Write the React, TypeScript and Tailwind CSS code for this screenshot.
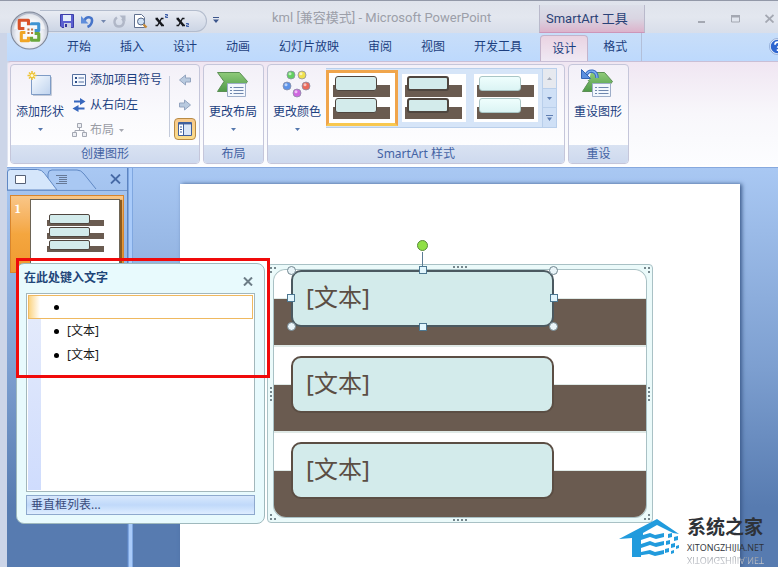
import type { ReactNode } from "react";
import clsx from "clsx";

const TABS = ["开始", "插入", "设计", "动画", "幻灯片放映", "审阅", "视图", "开发工具"];

const ITEMS = ["[文本]", "[文本]", "[文本]"];

function Caret({ className }: { className?: string }) {
  return (
    <svg width="5" height="3" viewBox="0 0 5 3" className={className}>
      <path d="M0 0h5L2.500 3z" fill="currentColor" />
    </svg>
  );
}

function OfficeOrb() {
  return (
    <button aria-label="Office" className="absolute left-[10px] top-[11px] z-10">
      <svg width="39" height="39" viewBox="0 0 38 38">
        <defs>
          <radialGradient id="orb" cx="50%" cy="60%" r="55%">
            <stop offset="0" stopColor="#ffffff" />
            <stop offset="0.65" stopColor="#eceef4" />
            <stop offset="1" stopColor="#b5bccb" />
          </radialGradient>
        </defs>
        <circle cx="19" cy="19" r="18" fill="url(#orb)" stroke="#7f8798" />
        <path d="M4 18a15 15 0 0 1 30 0q-15-6-30 0z" fill="#fff" opacity="0.6" />
        <g fill="none" strokeWidth="3" strokeLinejoin="round">
          <path d="M14 17H9V9h9v5" stroke="#d9532a" />
          <path d="M21 14v-1.500h7V19h-4" stroke="#3f93d2" />
          <path d="M15 21h-4v8h7v-4" stroke="#f0a526" />
          <path d="M24 22h4v6.500h-7V25" stroke="#6aa83c" />
        </g>
        <path d="M17 17h2v2h-2zM20.500 17h2v2h-2zM17 20.500h2v2h-2zM20.500 20.500h2v2h-2z" fill="#c0703f" />
      </svg>
    </button>
  );
}

function SaveIcon() {
  return (
    <svg width="14" height="14" viewBox="0 0 14 14">
      <path d="M.5.5h13v13H2L.5 12z" fill="#5a5fd0" stroke="#3c3ea8" />
      <path d="M3 1h8v6H3z" fill="#e4ecfa" />
      <path d="M4 9h7v5H4z" fill="#c9cfe2" />
      <path d="M5 10h2v3H5z" fill="#35359a" />
    </svg>
  );
}

function UndoIcon() {
  return (
    <svg width="13" height="13" viewBox="0 0 13 13">
      <path d="M3.500 5.500C5 1 11.500 1 11 6c-.2 2.700-1.500 4.700-4.500 6" fill="none" stroke="#4674c9" strokeWidth="2.600" />
      <path d="M0 1v7.500h7.500z" fill="#5f8ddb" />
    </svg>
  );
}

function RedoIcon() {
  return (
    <svg width="13" height="13" viewBox="0 0 13 13">
      <path d="M4 2.500C0 5 1 11.500 6 11.500S12 6 9 3.500" fill="none" stroke="#b0b7c7" strokeWidth="2.400" />
      <path d="M6.500.5h6v6z" fill="#b0b7c7" />
    </svg>
  );
}

function PreviewIcon() {
  return (
    <svg width="15" height="15" viewBox="0 0 15 15">
      <path d="M1.500.5h7l3 3v10h-10z" fill="#fff" stroke="#60708f" />
      <circle cx="8" cy="7.500" r="3.500" fill="#cfe1f5" stroke="#536585" />
      <path d="M10.500 10.500l3 3" stroke="#c58a3a" strokeWidth="2.400" />
    </svg>
  );
}

function ScriptIcon({ sub }: { sub?: boolean }) {
  return (
    <svg width="14" height="14" viewBox="0 0 14 14" fill="none">
      <path d="M1.500 4.500l6 7" stroke="#16181d" strokeWidth="2.600" />
      <path d="M.5 4.500h2.500M6 11.500h3M8.500 4.500H6.500L2.500 11.500H.5" stroke="#16181d" strokeWidth="1.300" />
      <path d={sub ? "M10 9.500h2.500v1.500H10.500v1.500H13" : "M10 .5h2.500V2H10.500v1.500H13"} stroke="#3e5fa8" />
    </svg>
  );
}

function TitleBar() {
  return (
    <div className="flex h-[33px] items-start border-t border-[#9298a8] bg-gradient-to-b from-[#dfe3ec] via-[#e3e7ef] to-[#d8deea] pl-[40px]">
      <div className="mt-[9px] flex h-[22px] w-[167px] shrink-0 items-center gap-[7px] rounded-r-full border border-l-0 border-[#b3bccd] bg-gradient-to-b from-[#e9ecf3] to-[#ccd5e5] pl-5">
        <button aria-label="保存"><SaveIcon /></button>
        <button aria-label="撤消"><UndoIcon /></button>
        <button aria-label="撤消列表" className="text-[#7286ae]"><Caret /></button>
        <button aria-label="恢复"><RedoIcon /></button>
        <button aria-label="打印预览"><PreviewIcon /></button>
        <button aria-label="上标"><ScriptIcon /></button>
        <button aria-label="下标"><ScriptIcon sub /></button>
      </div>
      <button aria-label="自定义快速访问工具栏" className="ml-1.5 mt-4 text-[#3d568c]">
        <svg width="6" height="6" viewBox="0 0 6 6" fill="currentColor">
          <path d="M0 0h6v1H0zM0 2.500h6L3 6z" />
        </svg>
      </button>
      <h1 className="ml-[53px] mt-[7px] w-[267px] shrink-0 whitespace-nowrap font-[Roboto,'Noto_Sans_CJK_SC',sans-serif] text-[13px] leading-5 text-[#9c9fa9]">
        kml [兼容模式] - Microsoft PowerPoint
      </h1>
      <div className="mt-1 h-7 w-[106px] shrink-0 border-x border-b border-x-[#b9b9cb] border-b-[#cd96b8] bg-gradient-to-b from-[#dcdfe9] via-[#d9d5e2] to-[#dcb3cb] pl-1.5 font-[Roboto,'Noto_Sans_CJK_SC',sans-serif] text-[13px] leading-[28px] text-[#2b4277]">
        SmartArt 工具
      </div>
      <div className="ml-auto flex items-center gap-[25px] pr-1 pt-[13px] text-[#a4a8b2]">
        <button aria-label="最小化">
          <svg width="9" height="9" viewBox="0 0 9 9"><path d="M1 7h7v2H1z" fill="currentColor" /></svg>
        </button>
        <button aria-label="最大化">
          <svg width="9" height="9" viewBox="0 0 9 9"><path d="M.5 1.500h8v6.500h-8z" fill="none" stroke="currentColor" /><path d="M0 1h9v2.500H0z" fill="currentColor" /></svg>
        </button>
        <button aria-label="关闭">
          <svg width="9" height="9" viewBox="0 0 9 9"><path d="M.5 1l8 7.500M8.500 1l-8 7.500" stroke="currentColor" strokeWidth="1.800" /></svg>
        </button>
      </div>
    </div>
  );
}

function TabBar() {
  return (
    <nav className="ml-[7px] flex h-7 items-end gap-px bg-gradient-to-b from-[#c8def9] to-[#bdd9fd] pl-[46px] text-[#1c3f80]">
      {TABS.map((tab) => (
        <button key={tab} className="h-7 shrink-0 px-3.5">{tab}</button>
      ))}
      <button className="ml-[3px] h-[26px] shrink-0 rounded-t border border-b-0 border-[#c3b3cb] bg-gradient-to-b from-[#ead3e2] to-[#efe9f4] px-[11px]">
        设计
      </button>
      <button className="h-7 shrink-0 border-r border-[#b2bfd9] px-3.5">格式</button>
      <button aria-label="帮助" className="mb-1.5 -mr-2 ml-auto shrink-0">
        <svg width="17" height="17" viewBox="0 0 17 17">
          <circle cx="8.500" cy="8.500" r="7.500" fill="#2f66cf" stroke="#e9f1fd" strokeWidth="1.500" />
          <circle cx="8.500" cy="8.500" r="8" fill="none" stroke="#6f8fc8" strokeWidth="0.700" />
          <path d="M6 6.700c0-3.400 5-3.200 5-.3 0 1.800-2.400 1.700-2.400 3.400M8.600 11.200v1.800" fill="none" stroke="#fff" strokeWidth="1.700" />
        </svg>
      </button>
    </nav>
  );
}

function Group({ label, className, children }: { label: string; className?: string; children: ReactNode }) {
  return (
    <section className={clsx("flex shrink-0 flex-col overflow-hidden rounded border border-[#c5c6da] bg-gradient-to-b from-[#f3f0f8] via-[#fafafd] to-white", className)}>
      <div className="flex h-20 pt-[3px]">{children}</div>
      <h2 className="h-[18px] bg-gradient-to-b from-[#d9e2f2] to-[#ced9ee] text-center leading-[18px] text-[#4463a4]">{label}</h2>
    </section>
  );
}

function BigButton({ label, caret, children }: { label: string; caret?: boolean; children: ReactNode }) {
  return (
    <button className="flex w-[58px] shrink-0 flex-col items-center text-[#1c3f80]">
      {children}
      <span className="mt-1 whitespace-nowrap leading-4">{label}</span>
      {caret && <Caret className="mt-2 text-[#5577ad]" />}
    </button>
  );
}

function AddShapeIcon() {
  return (
    <svg width="32" height="32" viewBox="0 0 32 32">
      <defs>
        <linearGradient id="shape" x1="0" y1="0" x2="1" y2="1">
          <stop offset="0" stopColor="#f7fbff" />
          <stop offset="1" stopColor="#bfd3ee" />
        </linearGradient>
      </defs>
      <path d="M7.500 7.500h19v19h-19z" fill="url(#shape)" stroke="#7f9cc6" />
      <path d="M27.500 9v18.500H9" fill="none" stroke="#c3cad8" />
      <path d="M8 3v9M3.500 7.500h9M5 4.500l6 6M11 4.500l-6 6" stroke="#eec437" strokeWidth="1.600" />
      <circle cx="8" cy="7.500" r="1.500" fill="#fffbd8" />
    </svg>
  );
}

function LayoutIcon({ reset }: { reset?: boolean }) {
  return (
    <svg width="36" height="32" viewBox="0 0 36 32">
      <defs>
        <linearGradient id="leaf" x1="0" y1="0" x2="0" y2="1">
          <stop offset="0" stopColor="#8fcb7a" />
          <stop offset="1" stopColor="#4f9a48" />
        </linearGradient>
      </defs>
      <path d="M2.500 4.500h22l8 9-8 10h-22l6.500-10z" fill="url(#leaf)" stroke="#5b8f55" />
      <path d="M12.500 15.500h18v13h-18z" fill="#f3f7fd" stroke="#9dadc8" />
      <path d="M15 19.500h2M18.500 19.500h10M15 22.500h2M18.500 22.500h10M15 25.500h2M18.500 25.500h10" stroke="#6e86ad" />
      {reset && (
        <>
          <path d="M0 0h12L9 12 2 13z" fill="#f6f4fa" />
          <path d="M6 7c3-6 11-5 11 3" fill="none" stroke="#3869c0" strokeWidth="3.400" />
          <path d="M6 7c3-6 11-5 11 3" fill="none" stroke="#7fb0f0" strokeWidth="1.400" />
          <path d="M1.500 1.500v9h9z" fill="#5c8fdf" stroke="#3564b5" />
        </>
      )}
    </svg>
  );
}

function ColorsIcon() {
  const dots = [
    [10, 7, "#62cf5f"],
    [21, 7, "#efe04d"],
    [6, 18, "#5c92e8"],
    [25, 18, "#ea6a5b"],
    [16, 25, "#cf66e0"],
  ] as const;
  return (
    <svg width="32" height="32" viewBox="0 0 32 32">
      {dots.map(([x, y, fill]) => (
        <g key={fill}>
          <circle cx={x} cy={y} r="4" fill={fill} stroke="#8b8fa5" strokeWidth="0.800" />
          <circle cx={x - 1} cy={y - 1.3} r="1.500" fill="#fff" opacity="0.600" />
        </g>
      ))}
    </svg>
  );
}

function ArrowIcon({ right }: { right?: boolean }) {
  return (
    <svg width="12" height="12" viewBox="0 0 12 12">
      <path
        d={right ? "M.5 4h5V1l6 5-6 5V8h-5z" : "M11.500 4h-5V1l-6 5 6 5V8h5z"}
        fill="#b9cadf"
        stroke="#93a4bf"
      />
    </svg>
  );
}

function CreateGroup() {
  return (
    <Group label="创建图形" className="w-[190px]">
      <BigButton label="添加形状" caret>
        <AddShapeIcon />
      </BigButton>
      <div className="flex flex-col gap-px pl-[3px] text-[#1c3f80]">
        <button className="flex h-6 items-center gap-[3px]">
          <svg width="15" height="14" viewBox="0 0 15 14">
            <path d="M.5 1.500h13v11H.5z" fill="#f4f8ff" stroke="#55709f" />
            <path d="M3 4h2v2H3zM3 8h2v2H3z" fill="#2f4f86" />
            <path d="M6.500 5H12M6.500 9H12" stroke="#55709f" />
          </svg>
          添加项目符号
        </button>
        <button className="flex h-6 items-center gap-[3px]">
          <svg width="15" height="14" viewBox="0 0 15 14" fill="#3767bd">
            <path d="M2 2.500h6V0l5.500 3.500L8 7V4.500H2zM12.500 9.500h-6V7L.5 10.500 6.500 14v-2.500h6z" />
          </svg>
          从右向左
        </button>
        <button className="flex h-6 items-center gap-[3px] text-[#9a9ca5]">
          <svg width="15" height="14" viewBox="0 0 15 14" fill="#eceef3" stroke="#a3a7b2">
            <path d="M7.500 5v3M3 10V7.500h9V10" fill="none" />
            <path d="M5.500.5h4v4h-4zM.5 9.500h4v4h-4zM10.500 9.500h4v4h-4z" />
          </svg>
          布局
          <Caret className="ml-0.5 text-[#a7a9b1]" />
        </button>
      </div>
      <div className="mb-2 ml-[7px] mt-2 w-px bg-[#c4cbdb]" />
      <div className="flex flex-col items-center gap-px pl-1">
        <button aria-label="升级" className="flex h-6 items-center"><ArrowIcon /></button>
        <button aria-label="降级" className="flex h-6 items-center"><ArrowIcon right /></button>
        <button aria-label="文本窗格" aria-pressed="true" className="flex h-[22px] w-[22px] items-center justify-center rounded-sm border border-[#b98b45] bg-gradient-to-b from-[#f8c98c] to-[#fbdc8a]">
          <svg width="14" height="14" viewBox="0 0 14 14">
            <path d="M.5.5h13v13H.5z" fill="#fff" stroke="#405f9d" />
            <path d="M1 1h12v1.500H1z" fill="#405f9d" />
            <path d="M2 5h2M2 7.500h2M2 10h2" stroke="#405f9d" />
            <path d="M5.500 2v11" stroke="#405f9d" />
            <path d="M6 3h7v10H6z" fill="#dbe6f7" />
          </svg>
        </button>
      </div>
    </Group>
  );
}

type Look = "outline" | "heavy" | "soft";

function StyleThumb({ look }: { look: Look }) {
  return (
    <span className="flex h-12 w-16 flex-col items-start gap-[10px] bg-white pl-[3px] pt-[11px]">
      {[0, 1].map((i) => (
        <span key={i} className="relative block h-3 w-[57px] bg-[#6a5b50]">
          <span
            className={clsx(
              "absolute -top-[9px] left-[2px] h-[15px] w-[42px] rounded-[3px]",
              look === "outline" && "border border-[#4f463f] bg-[#d3ebeb]",
              look === "heavy" && "border-2 border-[#4f463f] bg-[#d3ebeb]",
              look === "soft" && "border border-[#a9c6c6] bg-gradient-to-b from-[#effefd] to-[#dbf4f4]"
            )}
          />
        </span>
      ))}
    </span>
  );
}

function StylesGroup() {
  return (
    <Group label="SmartArt 样式" className="w-[298px]">
      <BigButton label="更改颜色" caret>
        <ColorsIcon />
      </BigButton>
      <div className="flex h-[60px] border border-l-0 border-[#b9cfeb] bg-[#d6e5f8]">
        <button aria-label="样式 1" className="mt-px flex h-14 w-[72px] items-center justify-center border-[3px] border-[#f0a54b] border-b-[#f8c850] bg-white">
          <StyleThumb look="outline" />
        </button>
        <button aria-label="样式 2" className="flex w-[72px] items-center justify-center"><StyleThumb look="heavy" /></button>
        <button aria-label="样式 3" className="flex w-[72px] items-center justify-center"><StyleThumb look="soft" /></button>
        <div className="flex w-[14px] flex-col divide-y divide-[#b9cfeb] border-l border-[#b9cfeb] text-[#5e7eb2]">
          <button aria-label="上一行" className="flex flex-1 items-center justify-center bg-[#e6e9ef] text-[#a5abb8]">
            <svg width="5" height="3" viewBox="0 0 5 3"><path d="M0 3h5L2.500 0z" fill="currentColor" /></svg>
          </button>
          <button aria-label="下一行" className="flex flex-1 items-center justify-center bg-[#cfe0f6]"><Caret /></button>
          <button aria-label="其他" className="flex flex-1 items-center justify-center bg-[#cfe0f6]">
            <svg width="7" height="6" viewBox="0 0 7 6" fill="currentColor"><path d="M0 0h7v1H0zM1 2.500h5L3.500 6z" /></svg>
          </button>
        </div>
      </div>
    </Group>
  );
}

function Ribbon() {
  return (
    <div className="ml-[7px] flex gap-[3px] rounded-tl border-b-2 border-l border-t border-[#dfe3f0] border-t-[#c9bfd6] border-b-white bg-gradient-to-b from-[#f0e6f2] via-[#f8f7fb] to-[#fcfdff] pb-px pl-0.5 pt-0.5">
      <CreateGroup />
      <Group label="布局" className="w-[61px]">
        <BigButton label="更改布局" caret>
          <LayoutIcon />
        </BigButton>
      </Group>
      <StylesGroup />
      <Group label="重设" className="w-[61px]">
        <BigButton label="重设图形">
          <LayoutIcon reset />
        </BigButton>
      </Group>
    </div>
  );
}

function SlidePane() {
  return (
    <aside className="w-[121px] shrink-0 border-r border-[#5d84c1]">
      <div className="relative flex h-[23px] items-center border-b border-[#6f94cc]">
        <svg width="120" height="22" viewBox="0 0 120 22" className="absolute left-0 top-0">
          <path d="M41 21V6q0-4 4-4h25q4 0 7 4l12 15" fill="#a9c8f3" stroke="#6088c4" />
          <path d="M.5 22V4q0-2.500 3-2.500h27q4 0 7 4L50 22z" fill="#d5e6fb" stroke="#6088c4" />
        </svg>
        <button aria-label="幻灯片" className="relative ml-2">
          <svg width="11" height="9" viewBox="0 0 11 9"><path d="M.5.5h10v8H.5z" fill="#fff" stroke="#566176" /></svg>
        </button>
        <button aria-label="大纲" className="relative ml-[30px]">
          <svg width="12" height="9" viewBox="0 0 12 9"><path d="M0 .5h11M3 2.500h8M3 4.500h8M3 6.500h8M0 8.500h11" stroke="#667997" /></svg>
        </button>
        <button aria-label="关闭" className="relative ml-auto mr-1.5">
          <svg width="11" height="10" viewBox="0 0 11 10"><path d="M1 .5l9 9M10 .5l-9 9" stroke="#476aa6" strokeWidth="1.800" /></svg>
        </button>
      </div>
      <button className="ml-[3px] mt-1 flex h-[78px] w-[114px] items-start border border-[#d8852d] bg-gradient-to-b from-[#f9c687] via-[#f4a63f] to-[#ef9a2f] pl-1 pt-[3px] text-white">
        <span className="w-[15px] text-left font-serif text-[12px] font-bold leading-5">1</span>
        <span className="flex h-[68px] w-[90px] flex-col items-start border border-[#6d6455] bg-white pl-4 pt-5 shadow-[2px_1px_1px_#8a5a20]">
          {ITEMS.map((_, i) => (
            <span key={i} className="relative mb-[7px] block h-1.5 w-[57px] bg-[#6a5b50]">
              <span className="absolute -top-[6px] left-[2px] h-[10px] w-[41px] rounded-[2px] border border-[#4f463f] bg-[#d3ebeb]" />
            </span>
          ))}
        </span>
      </button>
    </aside>
  );
}

function Grip({ className, count = 4 }: { className: string; count?: number }) {
  return (
    <span className={clsx("absolute flex gap-0.5", className)}>
      {Array.from({ length: count }, (_, i) => (
        <i key={i} className="block h-0.5 w-0.5 bg-[#75868c]" />
      ))}
    </span>
  );
}

const ROUND = "absolute h-[9px] w-[9px] rounded-full border border-[#71868f] bg-[#e9f4f8]";
const SQUARE = "absolute h-2 w-2 border border-[#4d7892] bg-[#e2f6fd]";

function Handles() {
  return (
    <>
      <span className="absolute -top-[20px] left-[129px] h-4 w-px bg-[#5d7d95]" />
      <span className="absolute -top-[32px] left-[124px] h-[11px] w-[11px] rounded-full border border-[#5a8a3c] bg-[#8fe045]" />
      <span className={clsx(ROUND, "-left-[6px] -top-[6px]")} />
      <span className={clsx(ROUND, "-right-[6px] -top-[6px]")} />
      <span className={clsx(ROUND, "-bottom-[6px] -left-[6px]")} />
      <span className={clsx(ROUND, "-bottom-[6px] -right-[6px]")} />
      <span className={clsx(SQUARE, "-top-[6px] left-[126px]")} />
      <span className={clsx(SQUARE, "-bottom-[6px] left-[126px]")} />
      <span className={clsx(SQUARE, "-left-[6px] top-[22px]")} />
      <span className={clsx(SQUARE, "-right-[6px] top-[22px]")} />
    </>
  );
}

function SmartArt() {
  return (
    <div className="absolute left-[87px] top-[80px] w-[386px] rounded border border-[#a9c1c5] bg-[#ebfafa] px-[5px] py-1">
      <div className="rounded-xl border border-[#a9c1c5] bg-[#dfe9e6]">
        {ITEMS.map((text, i) => (
          <div key={i} className="relative">
            <div className={clsx("h-7 bg-white", i === 0 && "rounded-t-xl")} />
            <div className={clsx("mt-px h-[46px] bg-[#6a5b50]", i === 2 && "rounded-b-xl")} />
            {i < 2 && <div className="h-[11px] border-t-2 border-[#dfe9e6] bg-white" />}
            <div
              className={clsx(
                "absolute left-[17px] top-0 h-[57px] w-[263px] rounded-[10px] border-2 bg-[#d3ebeb] pl-[13px] text-2xl leading-[49px] text-[#5b4e44]",
                i === 0 ? "border-[#4b5960]" : "border-[#5b4e44]"
              )}
            >
              {text}
              {i === 0 && <Handles />}
            </div>
          </div>
        ))}
      </div>
      <Grip className="left-[185px] top-px" />
      <Grip className="bottom-px left-[185px]" />
      <Grip className="left-[2px] top-[122px] flex-col" />
      <Grip className="right-[2px] top-[122px] flex-col" />
      <Grip className="left-[2px] top-[2px]" count={2} />
      <Grip className="left-[2px] top-[6px]" count={1} />
      <Grip className="right-[2px] top-[2px]" count={2} />
      <Grip className="right-[2px] top-[6px]" count={1} />
      <Grip className="bottom-[2px] left-[2px]" count={2} />
      <Grip className="bottom-[6px] left-[2px]" count={1} />
      <Grip className="bottom-[2px] right-[2px]" count={2} />
      <Grip className="bottom-[6px] right-[2px]" count={1} />
    </div>
  );
}

function TextPane() {
  return (
    <div className="absolute left-[16px] top-[95px] w-[249px] rounded-lg border border-[#9fb9bd] bg-[#e8fafd] px-[9px] pb-2 pt-1">
      <div className="flex h-[25px] items-start justify-between">
        <h3 className="-ml-0.5 font-bold leading-5 text-[#1f4679]">在此处键入文字</h3>
        <button aria-label="关闭" className="mr-0.5 mt-[9px]">
          <svg width="10" height="9" viewBox="0 0 10 9"><path d="M1 .5l8 8M9 .5l-8 8" stroke="#6d7d87" strokeWidth="2" /></svg>
        </button>
      </div>
      <div className="relative h-[199px] border border-[#a3b7bb] bg-white p-px">
        <div className="absolute bottom-px left-px top-px w-[13px] bg-gradient-to-b from-[#e6ecfb] to-[#cfdcfd]" />
        <ul className="relative leading-6 text-[#1a1a1a]">
          {["", "[文本]", "[文本]"].map((text, i) => (
            <li
              key={i}
              className={clsx(
                "flex h-6 items-center gap-2",
                i === 0
                  ? "border border-[#efb960] bg-gradient-to-r from-[#fbd481] via-white via-5% to-white pl-[25px]"
                  : "pl-[26px]"
              )}
            >
              <span className="h-[5px] w-[5px] rounded-full bg-black" />
              {text}
            </li>
          ))}
        </ul>
      </div>
      <button className="mt-[3px] block h-5 w-full border border-[#8ea9cd] bg-gradient-to-b from-[#d8e8fc] via-[#c0d9fa] to-[#deedff] pl-1 text-left leading-[18px] text-[#3a4c7c]">
        垂直框列表...
      </button>
    </div>
  );
}

function Watermark() {
  return (
    <div className="absolute bottom-0 right-[14px] flex items-start gap-1.5">
      <svg width="62" height="38" viewBox="0 0 62 38" className="mt-1.5">
        <path d="M0 20L38 0l22 15-6-1-16-8-14 8v3l-7 4v13h5v4h-9V19z" fill="#219bdd" />
        <path d="M17 18l14-4 5 2 9-2v4l-8 2-6-2-9 3v4l9-3 5 2 9-2v4l-8 2-6-2-9 3v4l9-2 5 2 9-2v4l-9 2-6-2-13 2z" fill="#219bdd" />
        <path d="M49 15l4-1v4l-4 1zM55 18l4-1v4l-4 1zM47 22l4-1v4l-4 1zM52 25l4-1v4l-4 1zM57 27l3-1v3l-3 1zM46 30l4-1v4l-4 1zM52 32l3-1v3l-3 1z" fill="#219bdd" />
      </svg>
      <div className="text-[#2e3238]">
        <div className="text-[19px] font-bold leading-7">系统之家</div>
        <div className="font-['Open_Sans'] text-[9px] leading-[13px]">XITONGZHIJIA.NET</div>
        <div aria-hidden="true" className="-scale-y-100 bg-gradient-to-t from-[#8a8f98] to-[#d8dade] bg-clip-text font-['Open_Sans'] text-[9px] leading-[13px] text-transparent">
          XITONGZHIJIA.NET
        </div>
      </div>
    </div>
  );
}

export default function App() {
  return (
    <div className="relative flex min-h-screen flex-col overflow-hidden bg-[#ccd5e8] font-['Noto_Sans','Noto_Sans_CJK_SC',sans-serif] text-[12px]">
      <OfficeOrb />
      <TitleBar />
      <TabBar />
      <Ribbon />
      <main className="ml-[7px] flex flex-1 border-t border-[#87a9de] bg-gradient-to-b from-[#a9c8f3] via-[#7d9fd0] via-50% to-[#577bb0] to-85%">
        <SlidePane />
        <div className="w-[5px] shrink-0 border-x border-[#7fa7e0] bg-[#a9cbfa]" />
        <div className="relative ml-[47px] mr-[38px] mt-4 min-h-[382px] flex-1 bg-white shadow-[2px_0_4px_#3d5c8c]">
          <SmartArt />
        </div>
      </main>
      <div className="absolute left-0 top-[168px]">
        <TextPane />
        <div className="absolute left-[16px] top-[90px] h-[120px] w-[254px] border-[3px] border-[#f00a0a]" />
      </div>
      <Watermark />
    </div>
  );
}
